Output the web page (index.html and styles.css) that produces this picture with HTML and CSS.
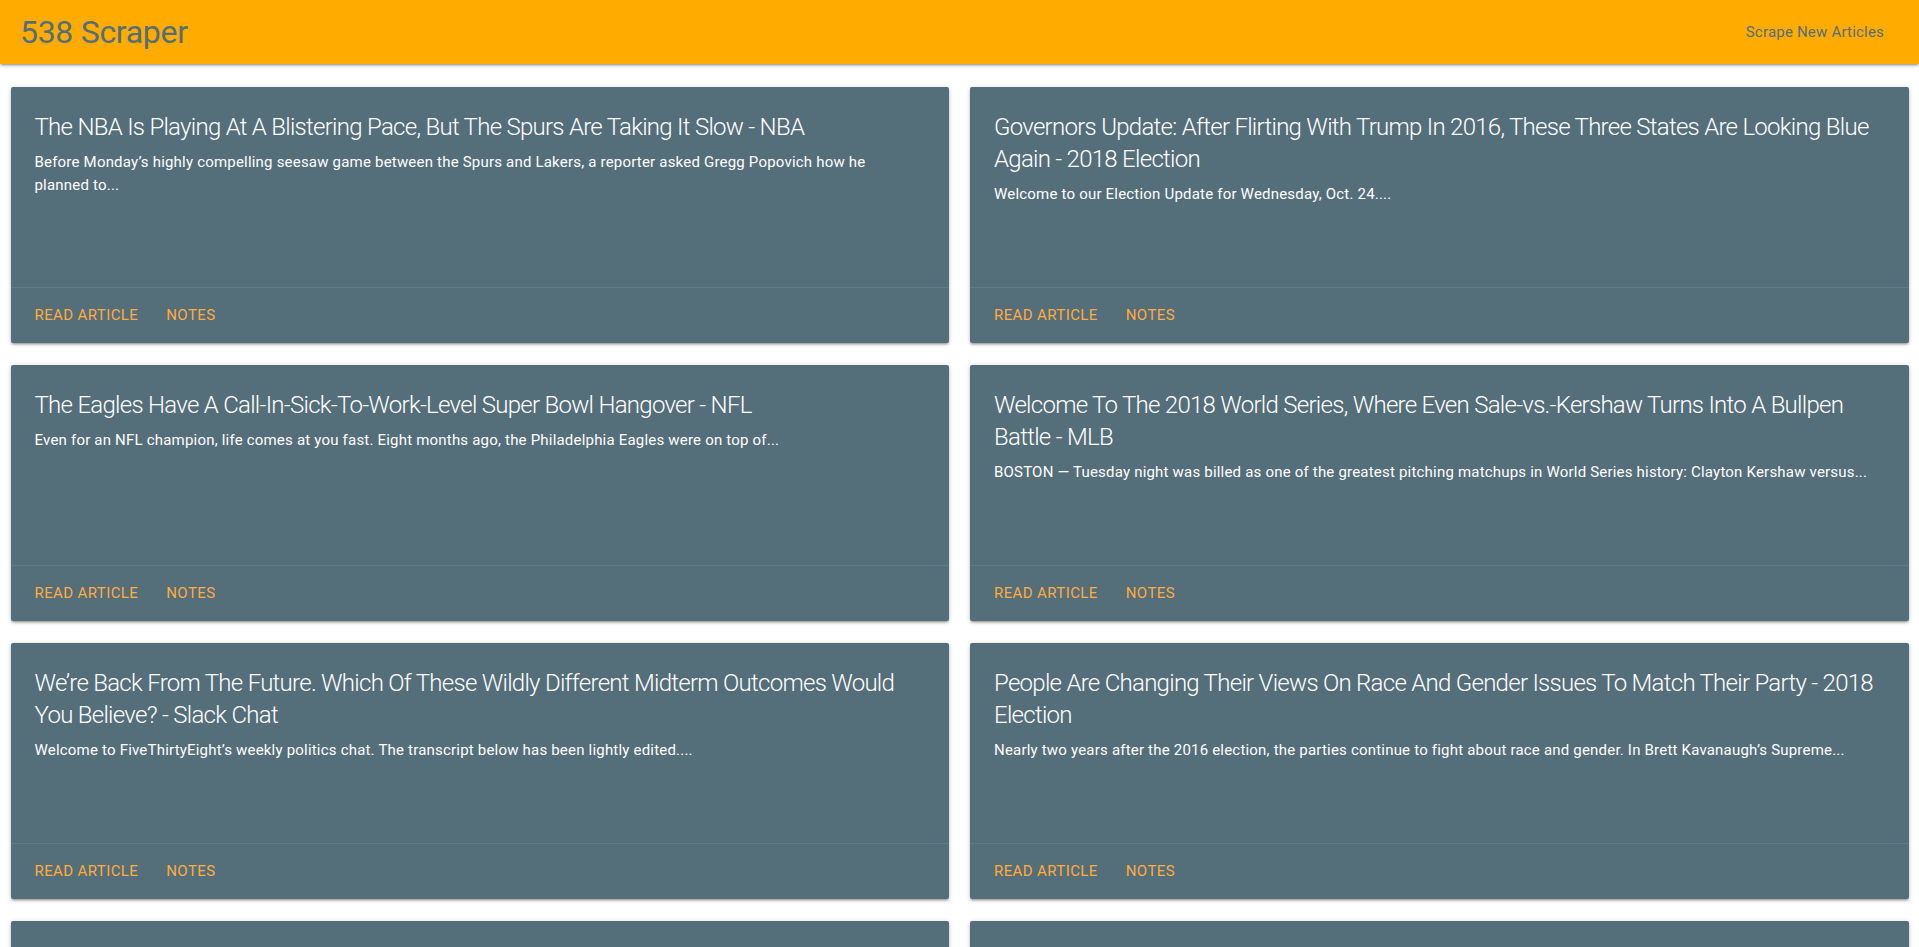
FILE: index.html
```html
<!DOCTYPE html>
<html lang="en">
<head>
<meta charset="utf-8">
<title>538 Scraper</title>
<link rel="stylesheet" href="styles.css">
</head>
<body>
<nav class="nav">
  <a class="brand" href="#">538 Scraper</a>
  <a class="nav-link" href="#">Scrape New Articles</a>
</nav>
<main class="grid">
  <div class="card">
    <div class="card-content">
      <h2 class="card-title">The NBA Is Playing At A Blistering Pace, But The Spurs Are Taking It Slow - NBA</h2>
      <p class="card-text">Before Monday’s highly compelling seesaw game between the Spurs and Lakers, a reporter asked Gregg Popovich how he<br>planned to...</p>
    </div>
    <div class="card-action"><a href="#">Read Article</a><a href="#">Notes</a></div>
  </div>
  <div class="card">
    <div class="card-content">
      <h2 class="card-title">Governors Update: After Flirting With Trump In 2016, These Three States Are Looking Blue Again - 2018 Election</h2>
      <p class="card-text">Welcome to our Election Update for Wednesday, Oct. 24....</p>
    </div>
    <div class="card-action"><a href="#">Read Article</a><a href="#">Notes</a></div>
  </div>
  <div class="card">
    <div class="card-content">
      <h2 class="card-title">The Eagles Have A Call-In-Sick-To-Work-Level Super Bowl Hangover - NFL</h2>
      <p class="card-text">Even for an NFL champion, life comes at you fast. Eight months ago, the Philadelphia Eagles were on top of...</p>
    </div>
    <div class="card-action"><a href="#">Read Article</a><a href="#">Notes</a></div>
  </div>
  <div class="card">
    <div class="card-content">
      <h2 class="card-title">Welcome To The 2018 World Series, Where Even Sale-vs.-Kershaw Turns Into A Bullpen Battle - MLB</h2>
      <p class="card-text">BOSTON — Tuesday night was billed as one of the greatest pitching matchups in World Series history: Clayton Kershaw versus...</p>
    </div>
    <div class="card-action"><a href="#">Read Article</a><a href="#">Notes</a></div>
  </div>
  <div class="card">
    <div class="card-content">
      <h2 class="card-title">We’re Back From The Future. Which Of These Wildly Different Midterm Outcomes Would You Believe? - Slack Chat</h2>
      <p class="card-text">Welcome to FiveThirtyEight’s weekly politics chat. The transcript below has been lightly edited....</p>
    </div>
    <div class="card-action"><a href="#">Read Article</a><a href="#">Notes</a></div>
  </div>
  <div class="card">
    <div class="card-content">
      <h2 class="card-title">People Are Changing Their Views On Race And Gender Issues To Match Their Party - 2018 Election</h2>
      <p class="card-text">Nearly two years after the 2016 election, the parties continue to fight about race and gender. In Brett Kavanaugh’s Supreme...</p>
    </div>
    <div class="card-action"><a href="#">Read Article</a><a href="#">Notes</a></div>
  </div>
  <div class="card">
    <div class="card-content">
      <h2 class="card-title">How Much Does A Midterm Wave Depend On Turnout? - 2018 Election</h2>
      <p class="card-text">There are two weeks left until Election Day, and the forecast still favors Democrats...</p>
    </div>
    <div class="card-action"><a href="#">Read Article</a><a href="#">Notes</a></div>
  </div>
  <div class="card">
    <div class="card-content">
      <h2 class="card-title">The Red Sox Have The Best Lineup In Baseball - MLB</h2>
      <p class="card-text">Boston scored more runs than any other team this season...</p>
    </div>
    <div class="card-action"><a href="#">Read Article</a><a href="#">Notes</a></div>
  </div>
</main>
</body>
</html>
```

FILE: styles.css
```css
* { box-sizing: border-box; }

html, body {
  margin: 0;
  padding: 0;
}

body {
  font-family: Roboto, "Liberation Sans", sans-serif;
  font-size: 15px;
  line-height: 1.5;
  color: rgba(0, 0, 0, 0.87);
  background: #ffffff;
}

a { text-decoration: none; }

.nav {
  height: 64px;
  background: #ffab00;
  display: flex;
  align-items: center;
  justify-content: space-between;
  padding: 0 20px;
  box-shadow: 0 2px 2px 0 rgba(0,0,0,0.14), 0 3px 1px -2px rgba(0,0,0,0.12), 0 1px 5px 0 rgba(0,0,0,0.2);
  position: relative;
  z-index: 2;
}

.brand {
  color: #546e7a;
  font-size: 32px;
  line-height: 64px;
  letter-spacing: -0.3px;
}

.nav-link {
  color: #546e7a;
  font-size: 15px;
  line-height: 64px;
  padding: 0 15px;
  letter-spacing: 0.2px;
}

.grid {
  display: grid;
  grid-template-columns: 1fr 1fr;
  column-gap: 21px;
  padding: 15.5px 10.5px 0;
}

.card {
  background: #546e7a;
  border-radius: 2px;
  margin: 7.5px 0 15px;
  box-shadow: 0 2px 2px 0 rgba(0,0,0,0.14), 0 3px 1px -2px rgba(0,0,0,0.12), 0 1px 5px 0 rgba(0,0,0,0.2);
  color: #ffffff;
}

.card-content {
  height: 200px;
  padding: 24px;
  overflow: hidden;
}

.card-title {
  margin: 0 0 8px;
  font-size: 24px;
  font-weight: 300;
  line-height: 32px;
  letter-spacing: -0.72px;
}

.card-text {
  margin: 0;
  font-size: 15px;
  line-height: 22.5px;
  letter-spacing: 0.2px;
}

.card-action {
  border-top: 1px solid rgba(160,160,160,0.2);
  padding: 16px 24px;
  line-height: 22.5px;
}

.card-action a {
  color: #ffab40;
  text-transform: uppercase;
  margin-right: 28px;
  letter-spacing: 0.4px;
}
```
